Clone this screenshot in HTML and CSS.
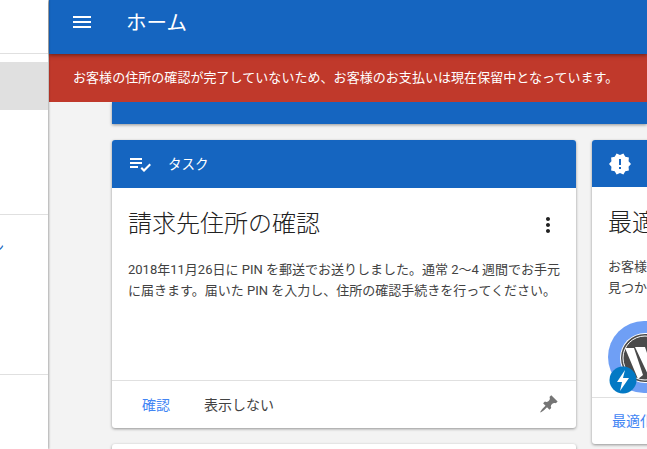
FILE: index.html
```html
<!DOCTYPE html>
<html lang="ja">
<head>
    <meta charset="UTF-8">
    <title>ホーム</title>
    <link rel="stylesheet" href="styles.css">
</head>
<body>
    <nav class="sidebar">
        <div class="side-top"></div>
        <div class="side-active"></div>
        <div class="side-group"><span class="side-label">ン</span></div>
        <div class="side-group"></div>
    </nav>

    <div class="main">
        <header class="topbar">
            <svg class="menu-icon" width="18" height="12" viewBox="0 0 18 12"><path fill="#fff" d="M0 0h18v2H0zM0 5h18v2H0zM0 10h18v2H0z"/></svg>
            <span class="topbar-title">ホーム</span>
        </header>
        <div class="alert">お客様の住所の確認が完了していないため、お客様のお支払いは現在保留中となっています。</div>

        <div class="content">
            <div class="summary"></div>
            <div class="columns">
                <div class="column">
                    <section class="card task-card">
                        <div class="card-head">
                            <svg width="24" height="24" viewBox="0 0 24 24"><path fill="#fff" d="M14 10H2v2h12v-2zm0-4H2v2h12V6zM2 16h8v-2H2v2zm19.5-4.5L23 13l-6.99 7-3.51-3.5L14 15l2.01 2 5.49-5.5z"/></svg>
                            <span class="card-head-title">タスク</span>
                        </div>
                        <div class="card-body">
                            <div class="title-row">
                                <h2>請求先住所の確認</h2>
                                <svg class="more-icon" width="24" height="24" viewBox="0 0 24 24"><path fill="#212121" d="M12 8c1.1 0 2-.9 2-2s-.9-2-2-2-2 .9-2 2 .9 2 2 2zm0 2c-1.1 0-2 .9-2 2s.9 2 2 2 2-.9 2-2-.9-2-2-2zm0 6c-1.1 0-2 .9-2 2s.9 2 2 2 2-.9 2-2-.9-2-2-2z"/></svg>
                            </div>
                            <p>2018年11月26日に PIN を郵送でお送りしました。通常 2～4 週間でお手元に届きます。届いた PIN を入力し、住所の確認手続きを行ってください。</p>
                        </div>
                        <div class="card-foot">
                            <a class="action primary">確認</a>
                            <a class="action">表示しない</a>
                            <svg class="pin-icon" width="20" height="20" viewBox="0 0 20 20"><path fill="#757575" d="M10.44 3.02l1.82-1.82 6.36 6.35-1.83 1.82c-1.05-.68-2.48-.57-3.41.36l-.75.75c-.92.93-1.04 2.35-.35 3.41l-1.83 1.82-2.41-2.41-2.8 2.79c-.42.42-3.38 2.71-3.8 2.29s1.86-3.39 2.28-3.81l2.79-2.79L4.1 9.36l1.83-1.82c1.05.69 2.48.57 3.4-.36l.75-.75c.93-.92 1.05-2.35.36-3.41z"/></svg>
                        </div>
                    </section>
                    <section class="card next-card"></section>
                </div>

                <div class="column">
                    <section class="card notice-card">
                        <div class="card-head">
                            <svg width="24" height="24" viewBox="0 0 24 24"><path fill="#fff" d="M23 12l-2.44-2.78.34-3.68-3.61-.82-1.89-3.18L12 3 8.6 1.54 6.71 4.72l-3.61.81.34 3.68L1 12l2.44 2.78-.34 3.69 3.61.82 1.89 3.18L12 21l3.4 1.46 1.89-3.18 3.61-.82-.34-3.68L23 12zm-10 5h-2v-2h2v2zm0-4h-2V7h2v6z"/></svg>
                        </div>
                        <div class="card-body">
                            <div class="title-row">
                                <h2>最適</h2>
                            </div>
                            <p>お客様<br>見つか</p>
                            <svg class="amp-logo" width="64" height="76" viewBox="0 0 64 76">
                                <circle cx="36" cy="36" r="36" fill="#6f9ff5"/>
                                <circle cx="37" cy="37" r="25" fill="#fff"/>
                                <circle cx="37" cy="37" r="24" fill="#4a4a4a"/>
                                <circle cx="37" cy="37" r="22" fill="none" stroke="#fff" stroke-width="1"/>
                                <path fill="#fff" d="M17 27h9l9 27-5 4zM27 26h10l10 30-5 2z"/>
                                <circle cx="15" cy="59" r="13.5" fill="#0379c4"/>
                                <path fill="#fff" d="M17 49l-8 12h5l-2 9 9-13h-6z"/>
                            </svg>
                        </div>
                        <div class="card-foot">
                            <a class="action primary">最適化</a>
                        </div>
                    </section>
                </div>
            </div>
        </div>
    </div>
</body>
</html>
```

FILE: styles.css
```css
html, body {
    height: 100%;
}
body {
    display: flex;
    margin: 0;
    overflow: hidden;
    font-family: Roboto, "Noto Sans CJK JP", sans-serif;
    color: #424242;
    background-color: #f3f3f3;
}

.sidebar {
    flex: none;
    width: 48px;
    height: 100%;
    background-color: #fff;
    box-shadow: 1px 0 2px rgba(0, 0, 0, 0.3);
    z-index: 3;
    overflow: hidden;
}
.side-top {
    height: 53px;
    border-bottom: 1px solid #e0e0e0;
}
.side-active {
    height: 48px;
    margin-top: 8px;
    background-color: #e0e0e0;
}
.side-group {
    height: 159px;
    border-top: 1px solid #e0e0e0;
    margin-top: 0;
}
.side-active + .side-group {
    margin-top: 104px;
}
.side-label {
    display: block;
    margin: 23px 0 0 -9px;
    font-size: 13px;
    line-height: 20px;
    color: #1565c0;
}

.main {
    flex: 1;
    min-width: 0;
    margin-left: 1px;
}
.topbar {
    display: flex;
    align-items: center;
    box-sizing: border-box;
    height: 54px;
    padding: 0 0 10px 24px;
    color: #fff;
    background-color: #1565c0;
    position: relative;
    z-index: 2;
    box-shadow: 0 1px 4px rgba(0, 0, 0, 0.5);
}
.topbar-title {
    margin: 0 0 3px 35px;
    font-size: 20.5px;
}
.alert {
    position: relative;
    z-index: 1;
    height: 48px;
    padding-left: 24px;
    font-size: 13px;
    letter-spacing: 0.05px;
    line-height: 47px;
    color: #fff;
    background-color: #c0392b;
}

.content {
    padding-left: 63px;
}
.summary {
    height: 22px;
    margin-bottom: 16px;
    background-color: #1565c0;
    box-shadow: 0 1px 3px rgba(0, 0, 0, 0.4);
}
.columns {
    display: flex;
    gap: 16px;
    align-items: flex-start;
}
.column {
    flex: none;
    width: 464px;
}

.card {
    display: flex;
    flex-direction: column;
    background-color: #fff;
    border-radius: 3px;
    box-shadow: 0 1px 3px rgba(0, 0, 0, 0.4);
    overflow: hidden;
}
.task-card {
    height: 288px;
}
.next-card {
    height: 60px;
    margin-top: 16px;
}
.notice-card {
    height: 304px;
}
.card-head {
    display: flex;
    align-items: center;
    flex: none;
    height: 48px;
    padding-left: 16px;
    background-color: #1565c0;
}
.notice-card .card-head {
    height: 47px;
}
.card-head-title {
    margin: 0 0 2px 16px;
    font-size: 13.5px;
    color: #fff;
}
.card-body {
    flex: 1;
    padding: 15px 12px 0 16px;
}
.title-row {
    display: flex;
    justify-content: space-between;
    align-items: center;
    height: 36px;
}
h2 {
    margin: 0;
    font-size: 24px;
    font-weight: 300;
    color: #212121;
}
.more-icon {
    margin: 7px 4px 0 0;
}
p {
    margin: 20px 0 0;
    font-size: 13px;
    line-height: 21px;
    color: #424242;
}
.notice-card p {
    margin-top: 18px;
}
.amp-logo {
    display: block;
    margin: 23px 0 0 0;
}
.card-foot {
    display: flex;
    align-items: center;
    flex: none;
    height: 48px;
    padding: 0 0 2px 30px;
    box-sizing: border-box;
    border-top: 1px solid #e0e0e0;
}
.notice-card .card-foot {
    height: 47px;
    padding-left: 20px;
}
.action {
    margin-right: 34px;
    font-size: 14px;
    color: #424242;
}
.action.primary {
    color: #4285f4;
}
.pin-icon {
    margin-left: auto;
    margin-right: 17px;
}
```
